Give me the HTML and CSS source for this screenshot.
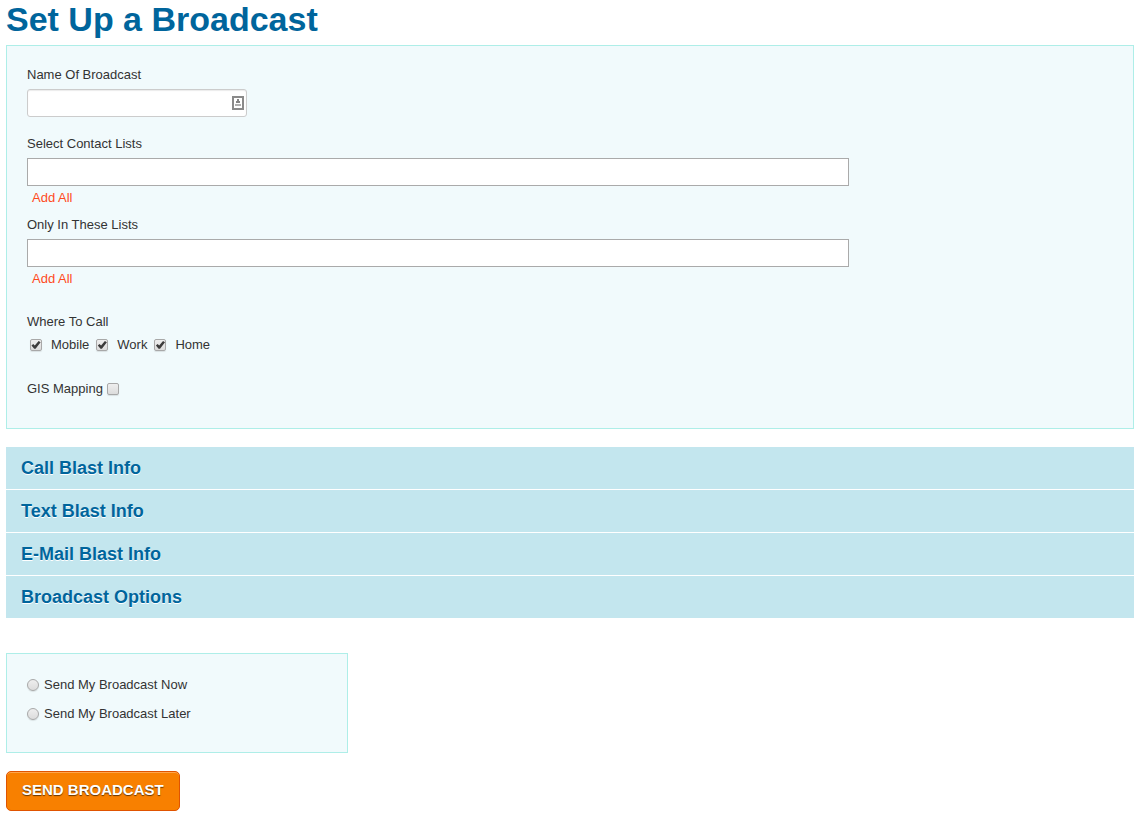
FILE: index.html
```html
<!DOCTYPE html>
<html lang="en">
<head>
    <meta charset="UTF-8">
    <meta name="viewport" content="width=device-width, initial-scale=1.0">
    <title>Set Up a Broadcast</title>
    <link rel="stylesheet" href="styles.css">
</head>

<body>
    <h1>Set Up a Broadcast</h1>
    <form>
        <div class="panel">
            <div class="field name-field">
                <label for="broadcastName">Name Of Broadcast</label>
                <div class="name-box">
                    <input type="text" id="broadcastName">
                    <svg class="contact-icon" width="12" height="14" viewBox="0 0 12 14" aria-hidden="true">
                        <rect x="1" y="1" width="10" height="12" fill="#fff" stroke="#8a8a8a" stroke-width="2"/>
                        <path d="M5 3h2v2h1v2H4V5h1z" fill="#858585"/>
                        <path d="M3 8h6v2H3z" fill="#b0b0b0"/>
                    </svg>
                </div>
            </div>
            <div class="field">
                <label for="contactLists">Select Contact Lists</label>
                <input type="text" id="contactLists" class="list-input">
                <a href="#" class="add-all">Add All</a>
            </div>
            <div class="field">
                <label for="onlyLists">Only In These Lists</label>
                <input type="text" id="onlyLists" class="list-input">
                <a href="#" class="add-all">Add All</a>
            </div>

            <fieldset class="where">
                <legend>Where To Call</legend>
                <div class="checks">
                    <label><input type="checkbox" checked>Mobile</label>
                    <label><input type="checkbox" checked>Work</label>
                    <label><input type="checkbox" checked>Home</label>
                </div>
            </fieldset>

            <div class="gis">
                <label for="gis">GIS Mapping</label>
                <input type="checkbox" id="gis">
            </div>
        </div>

        <div class="accordion">
            <h3><button type="button">Call Blast Info</button></h3>
            <h3><button type="button">Text Blast Info</button></h3>
            <h3><button type="button">E-Mail Blast Info</button></h3>
            <h3><button type="button">Broadcast Options</button></h3>
        </div>

        <div class="panel send-panel">
            <label><input type="radio" name="sendTime" value="now">Send My Broadcast Now</label>
            <label><input type="radio" name="sendTime" value="later">Send My Broadcast Later</label>
        </div>

        <button type="submit" class="send-btn">SEND BROADCAST</button>
    </form>
</body>
</html>
```
FILE: styles.css
```css
* {
    box-sizing: border-box;
}

body {
    font-family: "Liberation Sans", Arial, sans-serif;
    font-size: 13px;
    line-height: 20px;
    color: #333;
    background-color: #fff;
    margin: 0;
    padding: 0 5px 0 6px;
}

h1 {
    margin: 0 0 7px;
    font-size: 34px;
    line-height: 38px;
    color: #00659c;
}

.panel {
    background-color: #f1fafc;
    border: 1px solid #aeeee8;
    padding: 19px 20px 29px;
}

.field {
    display: flex;
    flex-direction: column;
    align-items: flex-start;
    margin-bottom: 7px;
}

.name-field {
    margin-bottom: 17px;
}

.field label {
    margin-bottom: 4px;
}

input[type="text"] {
    width: 100%;
    height: 28px;
    padding: 4px 6px;
    font: inherit;
    color: #555;
    background-color: #fff;
    border: 1px solid #aaa;
}

.name-box {
    position: relative;
    width: 220px;
}

.name-box input[type="text"] {
    display: block;
    padding-right: 20px;
    border-color: #ccc;
    border-radius: 3px;
    box-shadow: inset 0 1px 1px rgba(0, 0, 0, 0.08);
}

.contact-icon {
    position: absolute;
    right: 3px;
    top: 7px;
}

input.list-input {
    max-width: 822px;
}

.add-all {
    margin: 2px 0 0 5px;
    color: #ff4a1c;
    text-decoration: none;
}

.where {
    margin: 23px 0 0;
    padding: 0;
    border: 0;
}

.where legend {
    padding: 0;
}

.checks {
    display: flex;
    gap: 7px;
    padding: 3px 0 0 3px;
}

.checks label {
    display: flex;
    align-items: center;
    gap: 9px;
}

.gis {
    display: flex;
    align-items: center;
    gap: 4px;
    margin-top: 24px;
}

input[type="checkbox"],
input[type="radio"] {
    appearance: none;
    width: 12px;
    height: 12px;
    margin: 0;
    border: 1px solid #a8a8a8;
    border-radius: 2px;
    background: linear-gradient(#eee, #dcdcdc);
    box-shadow: 0 1px 1px rgba(0, 0, 0, 0.1);
}

input[type="radio"] {
    border-radius: 50%;
}

/* tick */
input[type="checkbox"]:checked::before {
    content: "";
    display: block;
    width: 10px;
    height: 10px;
    background-color: #3c3c3c;
    clip-path: polygon(5% 54%, 22% 40%, 38% 56%, 76% 10%, 96% 22%, 46% 88%, 32% 88%);
}

.accordion {
    display: flex;
    flex-direction: column;
    gap: 1px;
    margin: 18px 0 35px;
}

.accordion h3 {
    margin: 0;
}

.accordion button {
    display: block;
    width: 100%;
    height: 42px;
    padding: 1px 15px 0;
    border: 0;
    background-color: #c3e6ee;
    color: #00659c;
    font-family: inherit;
    font-size: 18px;
    font-weight: bold;
    text-align: left;
    text-shadow: 0 1px 0 #fff;
    cursor: pointer;
}

.send-panel {
    display: flex;
    flex-direction: column;
    gap: 9px;
    max-width: 342px;
    padding: 21px 20px 28px;
}

.send-panel label {
    display: flex;
    align-items: center;
    gap: 5px;
}

.send-btn {
    display: block;
    height: 40px;
    margin-top: 18px;
    padding: 0 15px 4px;
    border: 1px solid #e05400;
    border-radius: 5px;
    background-color: #f88000;
    box-shadow: inset 0 1px 0 #ffa64d;
    color: #fff;
    font-family: inherit;
    font-size: 15px;
    font-weight: bold;
    text-shadow: 0 1px 1px rgba(0, 0, 0, 0.6);
    cursor: pointer;
}
```
